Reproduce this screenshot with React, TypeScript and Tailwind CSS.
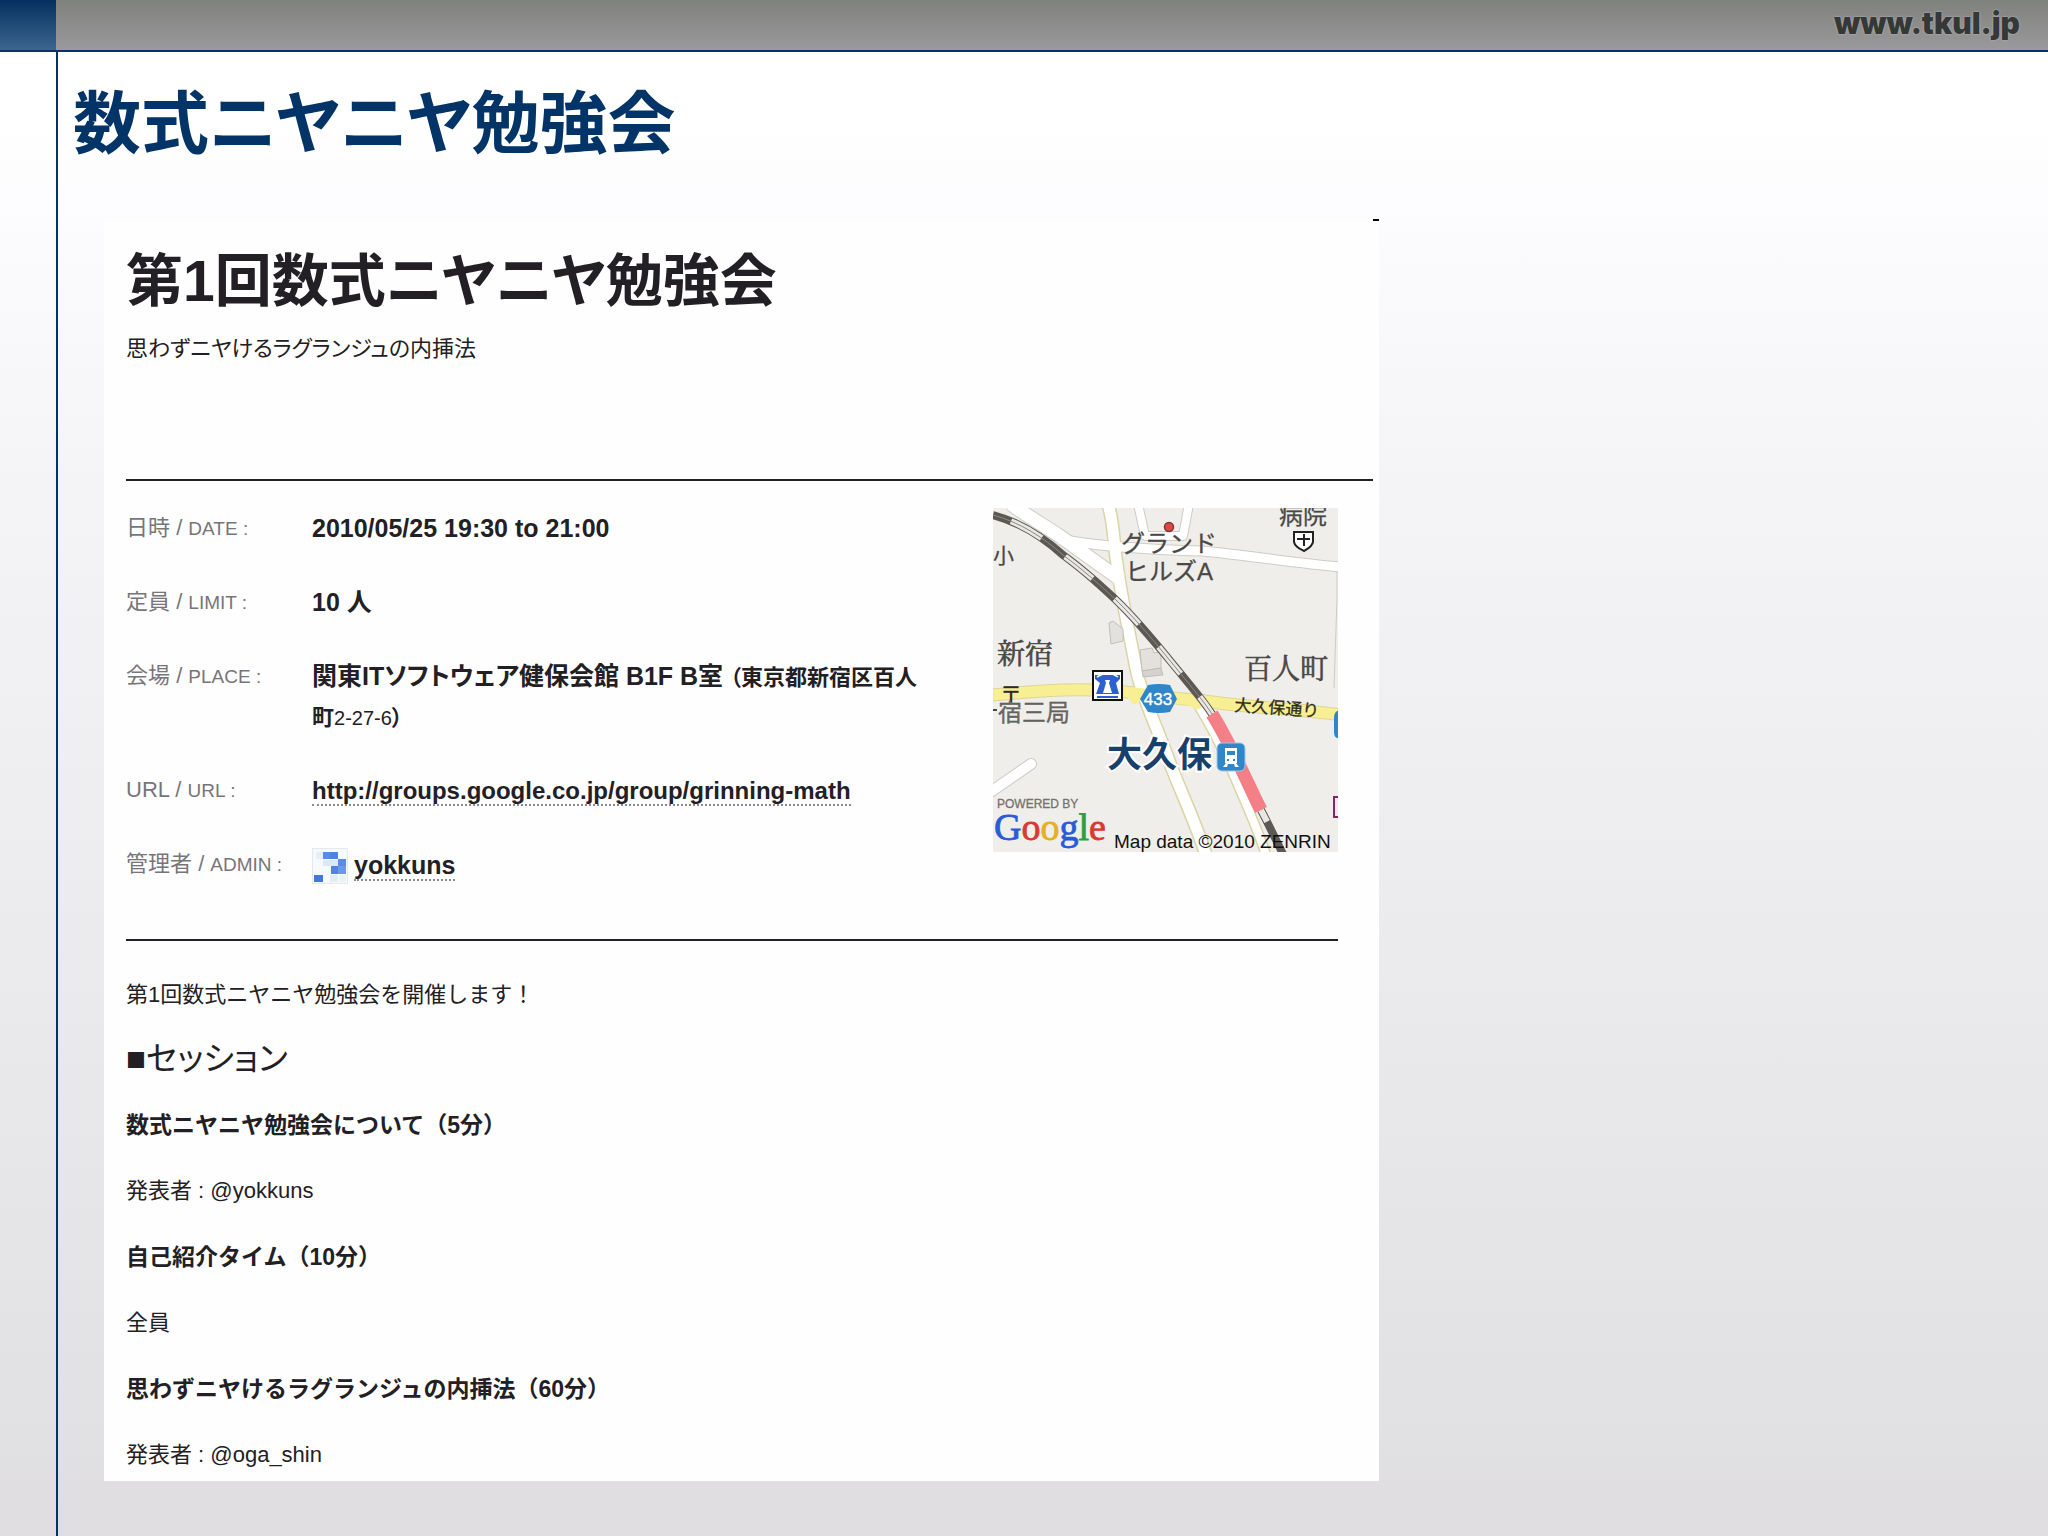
import type { ReactNode } from "react";

const details: { label: string; en: string; value: ReactNode }[] = [
  { label: "日時", en: "DATE", value: "2010/05/25 19:30 to 21:00" },
  { label: "定員", en: "LIMIT", value: "10 人" },
  {
    label: "会場",
    en: "PLACE",
    value: (
      <>
        関東ITソフトウェア健保会館 B1F B室{" "}
        <span className="text-[22px] leading-none">
          （東京都新宿区百人町<span className="text-[20px] font-normal">2-27-6</span>）
        </span>
      </>
    ),
  },
  {
    label: "URL",
    en: "URL",
    value: (
      <a
        href="http://groups.google.co.jp/group/grinning-math"
        className="border-b-2 border-dotted border-[#8a8a8e] text-2xl leading-none"
      >
        http://groups.google.co.jp/group/grinning-math
      </a>
    ),
  },
  {
    label: "管理者",
    en: "ADMIN",
    value: (
      <span className="flex h-11 items-center gap-1.5">
        <Avatar />
        <a href="#yokkuns" className="border-b-2 border-dotted border-[#8a8a8e] leading-7">
          yokkuns
        </a>
      </span>
    ),
  },
];

const sessions = [
  { title: "数式ニヤニヤ勉強会について（5分）", speaker: "発表者 : @yokkuns" },
  { title: "自己紹介タイム（10分）", speaker: "全員" },
  { title: "思わずニヤけるラグランジュの内挿法（60分）", speaker: "発表者 : @oga_shin" },
];

function Avatar() {
  return (
    <svg viewBox="0 0 36 36" className="size-9" aria-hidden="true">
      <rect x="0.5" y="0.5" width="35" height="35" fill="#f7fafc" stroke="#e4e9ee" />
      <rect x="4" y="4" width="7" height="7" fill="#e6effa" />
      <rect x="11" y="4" width="7" height="7" fill="#5a8be6" />
      <rect x="18" y="4" width="8" height="7" fill="#4f82e4" />
      <rect x="11" y="12" width="15" height="6" fill="#dce7f8" />
      <rect x="26" y="11" width="8" height="7" fill="#5a8be6" />
      <rect x="19" y="18" width="7" height="8" fill="#4f82e4" />
      <rect x="26" y="18" width="8" height="8" fill="#6b98e9" />
      <rect x="2" y="27" width="9" height="7" fill="#4478df" />
      <rect x="18" y="27" width="8" height="7" fill="#e3edf4" />
      <rect x="27" y="27" width="7" height="7" fill="#eaf2f3" />
    </svg>
  );
}

function StationMap() {
  const rail = "M0 7 C26 14 50 29 70 47 C88 60 106 76 122 91 C150 118 172 147 188 166 C200 181 210 192 219 206";
  const railEnd = "M268 302 C276 317 282 330 290 346";
  const avenue = "M115 -4 C122 20 120 34 124 56 C128 88 135 118 141 150 C146 182 160 210 172 242 C184 276 202 312 214 350";
  const sideRoad = "M202 192 C216 214 232 246 242 270 C254 298 266 324 274 350";
  const yellowRoad = "M-2 187 C30 185 62 180 98 182 C140 182 172 191 206 192 C250 200 300 200 348 207";

  return (
    <svg
      viewBox="0 0 345 344"
      role="img"
      aria-label="大久保"
      className="w-[345px] flex-none self-start overflow-hidden font-['Liberation_Sans','Noto_Sans_CJK_JP',sans-serif] [font-feature-settings:normal]"
    >
      <rect width="345" height="344" fill="#f0eeea" />

      {/* small roads */}
      <g fill="none" strokeLinejoin="round">
        <g stroke="#cfccc6">
          <path d="M145 -4 L152 28 H190 L196 -4" strokeWidth="10" />
          <path d="M18 -4 C34 8 52 18 68 29 L128 72" strokeWidth="15" />
          <path d="M66 31 C100 38 160 42 210 43 C260 48 310 56 348 59" strokeWidth="11" />
          <path d="M-4 285 L38 256" strokeWidth="12" strokeLinecap="round" />
          <path d="M344 62 V90 L341 180" strokeWidth="1" />
        </g>
        <path d={avenue} stroke="#d9d5a4" strokeWidth="14" />
        <path d={sideRoad} stroke="#d9d5a4" strokeWidth="11" />
        <path d={yellowRoad} stroke="#dfd694" strokeWidth="13" />
        <g stroke="#ffffff">
          <path d="M145 -4 L152 28 H190 L196 -4" strokeWidth="8" />
          <path d="M18 -4 C34 8 52 18 68 29 L128 72" strokeWidth="13" />
          <path d="M66 31 C100 38 160 42 210 43 C260 48 310 56 348 59" strokeWidth="9" />
          <path d="M-4 285 L38 256" strokeWidth="10" strokeLinecap="round" />
          <path d={avenue} strokeWidth="11" />
          <path d={sideRoad} strokeWidth="8" />
        </g>
        <path d={yellowRoad} stroke="#f8ef94" strokeWidth="11" />
        <path d="M132 182 L142 193 L152 184 M190 190 L204 198 L214 190" stroke="#f8ef94" strokeWidth="7" />
      </g>

      {/* buildings */}
      <g fill="#e3e1dd" stroke="#c2bfba">
        <path d="M116 115 L120 113 L130 121 V133 L118 136 Z" />
        <path d="M147 142 L159 140 L161 145 L168 144 V160 L149 163 Z" />
        <path d="M149 163 L168 160 L170 167 L150 169 Z" fill="#d5d2cd" />
      </g>

      {/* railway */}
      <g fill="none">
        <path d={rail} stroke="#5c5955" strokeWidth="8" />
        <path d={rail} stroke="#e9e7e3" strokeWidth="6" strokeDasharray="35 30" strokeDashoffset="-19" />
        <path d={rail} stroke="#8b8883" strokeWidth="1" />
        <path d={railEnd} stroke="#5c5955" strokeWidth="8" />
        <path d={railEnd} stroke="#e9e7e3" strokeWidth="6" strokeDasharray="13 60" />
        <path d="M219 206 C238 236 252 270 268 302" stroke="#f57f87" strokeWidth="13" />
      </g>

      <circle cx="176" cy="19" r="4.5" fill="#e04848" stroke="#7d3434" strokeWidth="1.5" />

      <g fill="#4a4846" stroke="#4a4846" strokeWidth="0.3">
        <text x="0" y="55" fontSize="21">小</text>
        <text x="128" y="44" fontSize="24">グランド</text>
        <text x="132" y="72" fontSize="24">ヒルズA</text>
        <text x="286" y="16" fontSize="24">病院</text>
        <text x="7" y="194" fontSize="22" fill="#222">〒</text>
        <path d="M0 202 H4" strokeWidth="2" />
        <text x="5" y="213" fontSize="24" fill="#6d6b69">宿三局</text>
      </g>
      <g
        fill="#4a4846"
        stroke="#4a4846"
        strokeWidth="0.6"
        className="font-['Noto_Serif_CJK_JP','Noto_Sans_CJK_JP',serif]"
      >
        <text x="4" y="156" fontSize="28">新宿</text>
        <text x="251" y="171" fontSize="28">百人町</text>
      </g>

      {/* hospital */}
      <path d="M301 24 H320 V34 C319 39 314 41 311 43 C307 41 302 39 301 34 Z" fill="#fff" stroke="#222" strokeWidth="2" />
      <path d="M311 26 V38 M304 31 H317" stroke="#222" strokeWidth="2" />

      {/* convenience store */}
      <rect x="100" y="163" width="29" height="29" fill="#fff" stroke="#111" strokeWidth="2" />
      <path d="M102 167 H127 V171 L123 175 L126 186 H103 L107 175 L102 171 Z" fill="#2c5fd0" />
      <path d="M104 169 Q115 162 125 169" fill="none" stroke="#fff" strokeWidth="1.5" />
      <path d="M112 172 H117 L116 175 L119 185 H110 L113 175 Z" fill="#fff" />
      <path d="M104 189 H125" stroke="#2c5fd0" strokeWidth="2" />

      {/* route number */}
      <path d="M147 191 L155 177 Q166 175 177 177 L184 191 L177 204 Q166 206 155 204 Z" fill="#2f86c8" />
      <text x="165" y="197" fontSize="17" fill="#fff" stroke="#fff" strokeWidth="0.4" textAnchor="middle">433</text>

      <text x="241" y="203" fontSize="17" fill="#2e2c20" stroke="#2e2c20" strokeWidth="0.3" transform="rotate(4 241 203)">
        大久保通り
      </text>

      <text x="114" y="259" fontSize="35" fontWeight="700" fill="#17406b" stroke="#fff" strokeWidth="4" paintOrder="stroke">
        大久保
      </text>

      {/* station */}
      <rect x="224" y="235" width="28" height="28" rx="5" fill="#2f86c8" stroke="#9fc8ea" />
      <path d="M232 240 H244 V255 H232 Z" fill="#fff" />
      <path d="M234 245 H242" stroke="#2f86c8" strokeWidth="4" />
      <path d="M234 252 H236 M240 252 H242" stroke="#2f86c8" strokeWidth="2" />
      <path d="M233 255 L230 259 H234 L235 256 H241 L242 259 H246 L243 255 Z" fill="#fff" />

      <path d="M348 203 H344 Q341 205 341 210 V224 Q341 229 344 230 H348 Z" fill="#2f86c8" />
      <rect x="341" y="289" width="12" height="20" fill="#f6e6f3" stroke="#7b2a66" strokeWidth="2" />

      <text x="4" y="300" fontSize="12" fill="#74726f" stroke="#74726f" strokeWidth="0.3">POWERED BY</text>
      <text x="1" y="332" fontSize="38" strokeWidth="0.8" className="font-['Liberation_Serif',serif]">
        <tspan fill="#2a5bd7" stroke="#2a5bd7">G</tspan>
        <tspan fill="#d93a2f" stroke="#d93a2f">o</tspan>
        <tspan fill="#e5b022" stroke="#e5b022">o</tspan>
        <tspan fill="#2a5bd7" stroke="#2a5bd7">g</tspan>
        <tspan fill="#2f9e3d" stroke="#2f9e3d">l</tspan>
        <tspan fill="#d93a2f" stroke="#d93a2f">e</tspan>
      </text>
      <text x="121" y="340" fontSize="19" fill="#111">Map data ©2010 ZENRIN</text>
    </svg>
  );
}

export default function App() {
  return (
    <div className="flex min-h-screen flex-col bg-[linear-gradient(#fff_8%,#fbfafd_16%,#f4f3f6_32%,#eeedf0_52%,#e1e0e2_93%,#dfdde0)] font-['Liberation_Sans','Noto_Sans_CJK_JP',sans-serif] text-[#222024]">
      <header className="flex h-13 border-b-2 border-[#0b2f66]">
        <div className="w-14 bg-linear-to-b from-[#04305f] to-[#3b668f]" />
        <div className="flex flex-1 items-center justify-end bg-linear-to-b from-[#7f817d] to-[#9b999c] pr-7 pb-1">
          <a
            href="http://www.tkul.jp"
            className="font-['Inter',sans-serif] text-[30px] leading-8 font-black text-[#343836] [text-shadow:0_0_2px_#c8c8c8]"
          >
            www.tkul.jp
          </a>
        </div>
      </header>

      <div className="flex flex-1">
        <div className="w-[58px] flex-none border-r-2 border-[#0b2f66]" />
        <main className="flex-1 pt-[30px]">
          <h1 className="pl-[15px] text-[68px] leading-[84px] font-bold text-[#033468] [font-feature-settings:'palt']">
            数式ニヤニヤ勉強会
          </h1>

          <article className="mt-[53px] ml-[46px] max-w-[1275px] bg-[#fefefe] pb-2.5 pl-[22px]">
            <div className="ml-auto h-0.5 w-1.5 bg-black" />
            <div className="[font-feature-settings:'palt']">
              <h2 className="mt-7 text-[57px] leading-16 font-bold">第1回数式ニヤニヤ勉強会</h2>
              <p className="mt-5 text-[22px] leading-8">思わずニヤけるラグランジュの内挿法</p>
            </div>
            <hr className="mt-[114px] mr-1.5 border-t-2 border-[#222024]" />

            <div className="mr-[41px] flex justify-between border-b-2 border-[#222024] pt-[27px] pb-[51px]">
              <dl className="flex flex-col gap-[34px] [font-feature-settings:'palt']">
                {details.map((item) => (
                  <div key={item.en} className="flex">
                    <dt className="w-[186px] flex-none text-[22px] leading-10 text-[#77757a]">
                      {item.label} / <span className="text-[19px] leading-none">{item.en} :</span>
                    </dt>
                    <dd className="max-w-[620px] text-[25px] leading-10 font-bold">{item.value}</dd>
                  </div>
                ))}
              </dl>
              <StationMap />
            </div>

            <p className="mt-[38px] text-[22px] leading-8">第1回数式ニヤニヤ勉強会を開催します！</p>
            <h3 className="mt-7 text-[33px] leading-10 [font-feature-settings:'palt']">■セッション</h3>
            <div className="mt-[30px] flex flex-col gap-[34px] text-[22px] leading-8">
              {sessions.map((s) => (
                <section key={s.title} className="flex flex-col gap-[34px]">
                  <h4 className="text-[23px] font-bold">{s.title}</h4>
                  <p>{s.speaker}</p>
                </section>
              ))}
            </div>
          </article>
        </main>
      </div>
    </div>
  );
}
